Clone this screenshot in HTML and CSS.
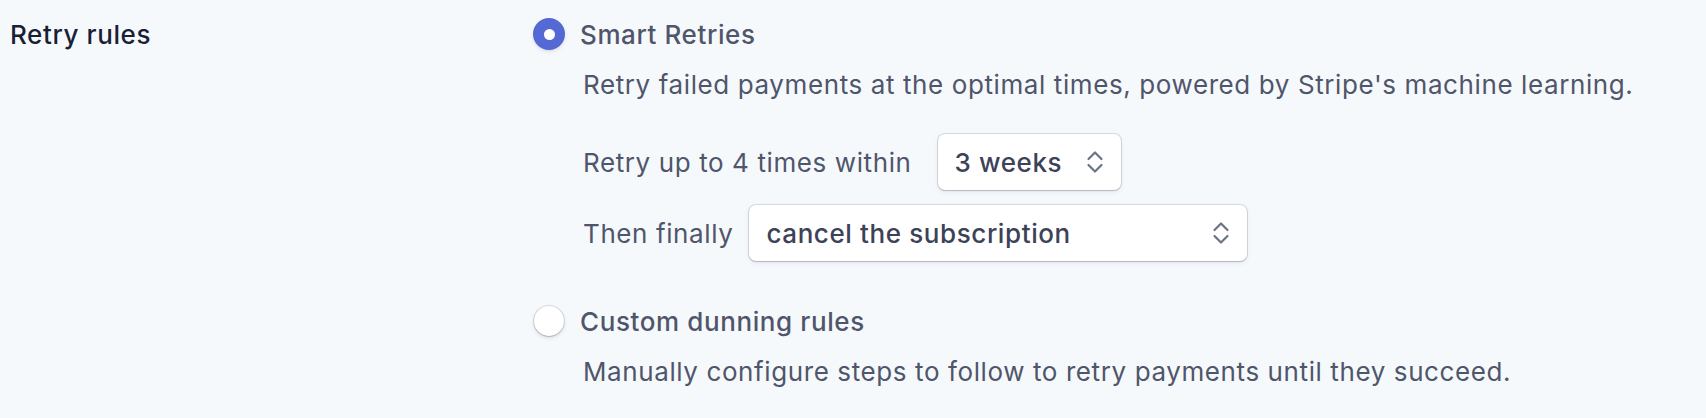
FILE: index.html
```html
<!DOCTYPE html>
<html lang="en">
<head>
<meta charset="utf-8">
<title>Retry rules</title>
<link rel="stylesheet" href="styles.css">
</head>
<body>
<div class="settings-row">
  <div class="row-label">Retry rules</div>
  <div class="row-options">
    <div class="option">
      <span class="radio radio-checked"><span class="radio-dot"></span></span>
      <div class="option-body">
        <div class="option-title">Smart Retries</div>
        <div class="option-desc">Retry failed payments at the optimal times, powered by Stripe's machine learning.</div>
        <div class="field-rows">
          <div class="field-row">
            <span class="field-label">Retry up to 4 times within</span>
            <div class="select select-short">
              <span class="select-value">3 weeks</span>
              <svg class="chevrons" viewBox="0 0 18 24" width="18" height="24"><path d="M2.5 9 L9 2.5 L15.5 9" /><path d="M2.5 15 L9 21.5 L15.5 15" /></svg>
            </div>
          </div>
          <div class="field-row">
            <span class="field-label">Then finally</span>
            <div class="select select-long">
              <span class="select-value">cancel the subscription</span>
              <svg class="chevrons" viewBox="0 0 18 24" width="18" height="24"><path d="M2.5 9 L9 2.5 L15.5 9" /><path d="M2.5 15 L9 21.5 L15.5 15" /></svg>
            </div>
          </div>
        </div>
      </div>
    </div>
    <div class="option option-second">
      <span class="radio"></span>
      <div class="option-body">
        <div class="option-title">Custom dunning rules</div>
        <div class="option-desc">Manually configure steps to follow to retry payments until they succeed.</div>
      </div>
    </div>
  </div>
</div>
</body>
</html>
```

FILE: styles.css
```css
html, body {
  margin: 0;
  padding: 0;
  background: #f6f9fc;
}

body {
  font-family: Inter, "Noto Sans", "Liberation Sans", sans-serif;
  font-size: 26px;
  letter-spacing: 0.6px;
  color: #4f566b;
}

.settings-row {
  display: flex;
  padding: 10px 0 0 10px;
}

.row-label {
  width: 524px;
  flex: none;
  line-height: 50px;
  font-weight: 500;
  color: #1a1f36;
}

.row-options {
  display: flex;
  flex-direction: column;
}

.option {
  display: flex;
  align-items: flex-start;
  gap: 16px;
}

.option-second {
  margin-top: 36px;
}

.radio {
  flex: none;
  width: 30px;
  height: 30px;
  margin-top: 9px;
  border-radius: 50%;
  background: #ffffff;
  box-shadow: 0 0 0 1px rgba(60, 66, 87, 0.16), 0 2px 4px rgba(60, 66, 87, 0.16), 0 1px 1px rgba(0, 0, 0, 0.1);
  display: flex;
  align-items: center;
  justify-content: center;
}

.radio-checked {
  background: #5469d4;
  box-shadow: 0 0 0 1px #5469d4, 0 2px 4px rgba(60, 66, 87, 0.2), 0 1px 1px rgba(0, 0, 0, 0.1);
}

.radio-dot {
  width: 11px;
  height: 11px;
  border-radius: 50%;
  background: #ffffff;
}

.option-title {
  line-height: 50px;
  font-weight: 500;
  color: #4f566b;
}

.option-desc {
  line-height: 50px;
  padding-left: 3px;
}

.field-rows {
  display: flex;
  flex-direction: column;
  gap: 15px;
  margin-top: 24px;
  padding-left: 3px;
}

.field-row {
  display: flex;
  align-items: center;
  gap: 16px;
}

.select {
  box-sizing: border-box;
  height: 56px;
  display: flex;
  align-items: center;
  justify-content: space-between;
  padding: 0 17px 0 17px;
  background: #ffffff;
  border-radius: 7px;
  box-shadow: 0 0 0 1px rgba(60, 66, 87, 0.16), 0 2px 5px rgba(60, 66, 87, 0.1), 0 1px 1px rgba(0, 0, 0, 0.12);
  font-weight: 500;
  letter-spacing: 0.6px;
  color: #3c4257;
}

.select-short {
  width: 183px;
  margin-left: 10px;
}

.select-long {
  width: 498px;
}

.chevrons {
  flex: none;
  fill: none;
  stroke: #6b7385;
  stroke-width: 2.2;
  stroke-linecap: round;
  stroke-linejoin: round;
}
```
